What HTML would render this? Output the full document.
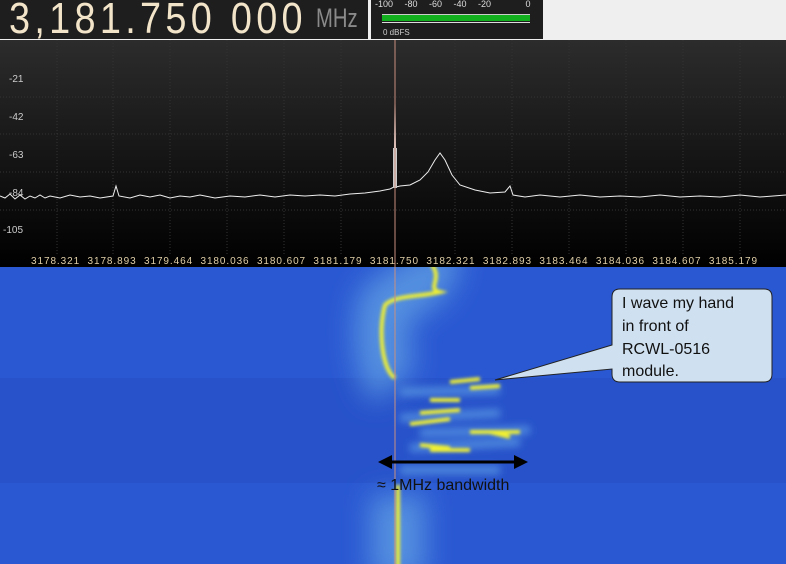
<!DOCTYPE html>
<html><head><meta charset="utf-8"><style>
body{margin:0;width:786px;height:564px;overflow:hidden;background:#efefef;font-family:"Liberation Sans",sans-serif;position:relative}
.abs{position:absolute}
</style></head><body>
<div class="abs" style="left:0;top:0;width:368px;height:39px;background:#1e1e1e"></div>
<div class="abs" style="left:9px;top:-6px;font-size:44px;color:#f2e4c8;letter-spacing:5px;white-space:nowrap;transform:scaleX(0.86);transform-origin:left">3,181.750 000</div>
<div class="abs" style="left:316px;top:3px;font-size:27px;color:#8a8a8a;transform:scaleX(0.75);transform-origin:left">MHz</div>
<div class="abs" style="left:371px;top:0;width:172px;height:39px;background:#1e1e1e"></div>
<div class="abs" style="left:375px;top:-1px;font-size:9px;color:#ddd;word-spacing:9px;white-space:nowrap">-100 -80 -60 -40 -20 &nbsp;&nbsp;0</div>
<div class="abs" style="left:382px;top:12px;width:148px;height:2px;border-bottom:1px solid #ccc"></div>
<div class="abs" style="left:382px;top:15px;width:148px;height:6px;background:#12b01e"></div>
<div class="abs" style="left:382px;top:22px;width:148px;height:1px;background:#ddd"></div>
<div class="abs" style="left:383px;top:28px;font-size:8px;color:#ccc">0 dBFS</div>
<svg class="abs" style="left:0;top:40px" width="786" height="524" viewBox="0 40 786 524">
<defs>
<linearGradient id="sp" x1="0" y1="0" x2="0" y2="1"><stop offset="0" stop-color="#2c2c2c"/><stop offset="1" stop-color="#000"/></linearGradient>
<filter id="bl" x="-200%" y="-50%" width="500%" height="200%"><feGaussianBlur stdDeviation="14"/></filter>
<filter id="bl1" x="-50%" y="-100%" width="200%" height="300%"><feGaussianBlur stdDeviation="4"/></filter>
<filter id="bl2" x="-50%" y="-50%" width="200%" height="200%"><feGaussianBlur stdDeviation="1.5"/></filter>
<clipPath id="wc"><rect x="0" y="267" width="786" height="297"/></clipPath>
</defs>
<rect x="0" y="40" width="786" height="227" fill="url(#sp)"/>
<g stroke="#333" stroke-dasharray="1 2" stroke-width="1">
<line x1="57" y1="40" x2="57" y2="255"/><line x1="113" y1="40" x2="113" y2="255"/><line x1="170" y1="40" x2="170" y2="255"/><line x1="227" y1="40" x2="227" y2="255"/><line x1="284" y1="40" x2="284" y2="255"/><line x1="341" y1="40" x2="341" y2="255"/><line x1="455" y1="40" x2="455" y2="255"/><line x1="512" y1="40" x2="512" y2="255"/><line x1="569" y1="40" x2="569" y2="255"/><line x1="626" y1="40" x2="626" y2="255"/><line x1="683" y1="40" x2="683" y2="255"/><line x1="740" y1="40" x2="740" y2="255"/>
<line x1="0" y1="97" x2="786" y2="97"/><line x1="0" y1="134" x2="786" y2="134"/><line x1="0" y1="172" x2="786" y2="172"/><line x1="0" y1="210" x2="786" y2="210"/>
</g>
<g fill="#ccc" font-size="10">
<text x="9" y="82">-21</text><text x="9" y="120">-42</text><text x="9" y="158">-63</text><text x="9" y="196">-84</text><text x="3" y="233">-105</text>
</g>
<text x="31" y="264" fill="#e0cfa8" font-size="10" textLength="726" lengthAdjust="spacing" xml:space="preserve">3178.321  3178.893  3179.464  3180.036  3180.607  3181.179  3181.750  3182.321  3182.893  3183.464  3184.036  3184.607  3185.179</text>
<polyline fill="none" stroke="#eee" stroke-width="1" points="0,196 5,198 10,194 15,199 20,195 25,199 30,196 35,198 40,195 45,198 50,196 60,198 70,195 80,197 90,196 100,198 113,196 116,186 119,196 130,198 140,195 150,197 160,195 170,198 180,196 190,197 200,195 215,198 230,196 245,197 260,195 275,197 290,195 305,196 320,195 335,196 350,194 365,193 380,191 390,189 394,187 395,103 396,187 400,186 410,185 420,180 428,172 435,160 440,153 445,160 452,175 460,185 475,190 490,193 505,192 510,186 513,195 525,197 540,195 560,197 580,195 600,197 620,196 640,197 660,195 680,197 700,196 720,197 740,195 760,197 786,195"/>
<rect x="393" y="148" width="4" height="40" fill="#ccc"/>
<rect x="0" y="267" width="786" height="297" fill="#2a58d2"/>
<rect x="0" y="378" width="786" height="105" fill="#1e40b4" opacity="0.25"/>
<g clip-path="url(#wc)">
<g filter="url(#bl)" fill="none" stroke="#5c9ae2" stroke-width="55" opacity="0.85">
<path d="M430,250 C440,285 400,290 385,305 C378,330 382,370 395,385"/>
<path d="M398,495 L398,580"/>
</g>
<g filter="url(#bl1)" fill="none" stroke="#4f8ade" stroke-width="8">
<path d="M400,392 L500,390 M400,418 L500,413 M420,433 L530,430 M410,448 L520,442 M400,470 L500,470"/>
</g>
<g filter="url(#bl2)" fill="none" stroke="#f0f030" stroke-width="4">
<path d="M430,262 C445,280 425,288 440,292 C420,297 395,295 385,305 C378,330 382,370 395,378"/>
<path d="M450,382 L480,379 M470,388 L500,386 M430,400 L460,400 M420,413 L460,410 M410,424 L450,419 M470,432 L520,432 M420,445 L450,448 M490,432 L510,437 M430,450 L470,450"/>
<path d="M398,485 L398,570"/>
</g>
</g>
<line x1="395" y1="40" x2="395" y2="564" stroke="#c89080" stroke-width="1"/>
<line x1="388" y1="462" x2="516" y2="462" stroke="#000" stroke-width="3"/>
<polygon points="378,462 392,455 392,469" fill="#000"/><polygon points="528,462 514,455 514,469" fill="#000"/>
<text x="377" y="490" font-size="16" fill="#111">≈ 1MHz bandwidth</text>
<path d="M620,289 H764 Q772,289 772,297 V374 Q772,382 764,382 H620 Q612,382 612,374 V369 L495,380 L612,345 V297 Q612,289 620,289 Z" fill="#cfe0f0" stroke="#222" stroke-width="1"/>
<g font-size="16" fill="#111"><text x="622" y="308">I wave my hand</text><text x="622" y="331">in front of</text><text x="622" y="354">RCWL-0516</text><text x="622" y="376">module.</text></g>
</svg>
</body></html>
